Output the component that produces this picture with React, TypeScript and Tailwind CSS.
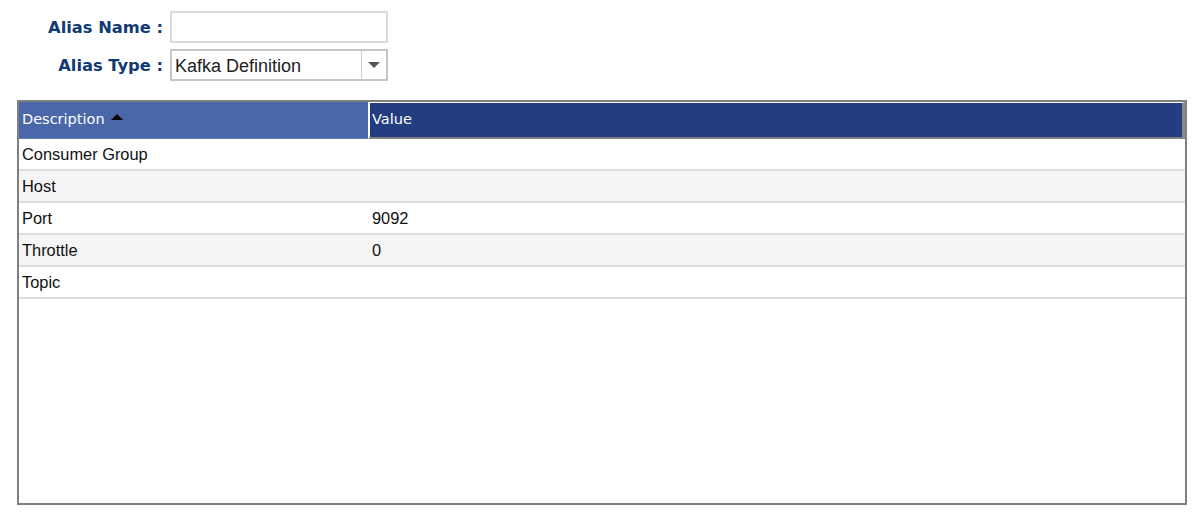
const rows = [
  { desc: "Consumer Group", value: "" },
  { desc: "Host", value: "" },
  { desc: "Port", value: "9092" },
  { desc: "Throttle", value: "0" },
  { desc: "Topic", value: "" },
]

const App = () => {
  return (
    <div className="w-[1204px] h-[517px] bg-white overflow-hidden">
      {/* Alias form */}
      <div className="grid grid-cols-[163px_218px] gap-x-[7px] gap-y-[6px] pt-[11px]">
        <label className="h-[32px] flex items-center justify-end pt-[2px] font-['DejaVu_Sans',sans-serif] font-bold text-[16.3px] text-[#0f3a73]">
          Alias Name :
        </label>
        <input type="text" className="h-[32px] w-[218px] border-2 border-[#dadada] outline-none px-1" />

        <label className="h-[32px] flex items-center justify-end pt-[3px] font-['DejaVu_Sans',sans-serif] font-bold text-[16.3px] text-[#0f3a73]">
          Alias Type :
        </label>
        <div className="h-[32px] w-[218px] border-2 border-[#c6c6c6] flex">
          <div className="flex-1 flex items-center pl-[3px] pt-[3px] font-['Liberation_Sans',Arial,sans-serif] text-[18px] text-[#222]">
            Kafka Definition
          </div>
          <div className="w-[25px] border-l border-[#d0d0d0] flex items-center justify-center">
            <div className="w-0 h-0 border-l-[6px] border-r-[6px] border-t-[6px] border-l-transparent border-r-transparent border-t-[#555]" />
          </div>
        </div>
      </div>

      {/* Grid */}
      <div className="mt-[19px] ml-[17px] w-[1170px] h-[405px] border-2 border-[#808080] flex flex-col">
        <div className="flex h-[37px] font-['DejaVu_Sans',sans-serif] text-[14.5px] text-white">
          <div className="w-[349px] bg-[#4a67aa] border-b border-[#5b78b8] flex items-center pl-[3px] gap-[6px]">
            Description
            <span className="w-0 h-0 border-l-[6px] border-r-[6px] border-b-[6px] border-l-transparent border-r-transparent border-b-black mb-[6px]" />
          </div>
          <div className="flex-1 bg-[#223e80] border-l-2 border-t border-white border-b-2 border-b-[#808080] border-r-[3px] border-r-[#8a8a8a] flex items-center pl-[2px]">
            Value
          </div>
        </div>

        {rows.map((row, i) => (
          <div
            key={row.desc}
            className={`flex h-[32px] border-b-2 border-[#dddddd] font-['Liberation_Sans',Arial,sans-serif] text-[16.4px] text-[#111] ${
              i % 2 === 1 ? "bg-[#f5f5f5]" : "bg-white"
            }`}
          >
            <div className="w-[349px] flex items-center pl-[3px]">{row.desc}</div>
            <div className="flex-1 flex items-center pl-[4px]">{row.value}</div>
          </div>
        ))}
      </div>
    </div>
  )
}

export default App
